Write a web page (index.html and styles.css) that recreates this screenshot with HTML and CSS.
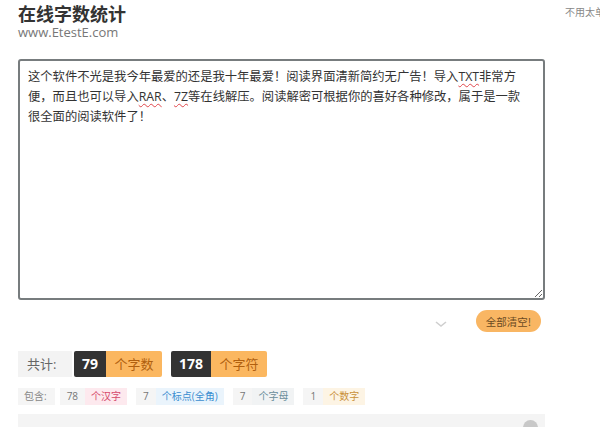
FILE: index.html
```html
<!DOCTYPE html>
<html lang="zh-CN">
<head>
    <meta charset="UTF-8">
    <meta name="viewport" content="width=device-width, initial-scale=1.0">
    <title>在线字数统计</title>
    <link rel="stylesheet" href="styles.css">
</head>
<body>
    <div class="page">
        <div class="main">
            <h1 class="title">在线字数统计</h1>
            <div class="site">www.EtestE.com</div>

            <!-- 输入区域 -->
            <div class="editor">这个软件不光是我今年最爱的还是我十年最爱！阅读界面清新简约无广告！导入<span class="typo">TXT</span>非常方<br>便，而且也可以导入<span class="typo">RAR</span>、<span class="typo">7Z</span>等在线解压。阅读解密可根据你的喜好各种修改，属于是一款<br>很全面的阅读软件了！</div>

            <div class="tools">
                <span class="more">
                    <svg width="12" height="8" viewBox="0 0 12 8"><path d="M1 2 L6 6 L11 2" fill="none" stroke="#cfcfcf" stroke-width="1.6"/></svg>
                </span>
                <button class="clear-btn">全部清空!</button>
            </div>

            <!-- 统计结果 -->
            <div class="total">
                <span class="total-label">共计:</span>
                <span class="num">79</span><span class="unit">个字数</span>
                <span class="num gap">178</span><span class="unit">个字符</span>
            </div>

            <div class="detail">
                <span class="detail-label">包含:</span>
                <span class="dnum">78</span><span class="dunit pink">个汉字</span>
                <span class="dnum">7</span><span class="dunit blue">个标点(全角)</span>
                <span class="dnum">7</span><span class="dunit slate">个字母</span>
                <span class="dnum">1</span><span class="dunit cream">个数字</span>
            </div>

            <div class="extra">
                <span class="close-dot"></span>
            </div>
        </div>
        <div class="side">不用太单独下载软件</div>
    </div>
</body>
</html>
```

FILE: styles.css
```css
body {
    margin: 0;
    background: #fff;
    color: #333;
    font-family: "Open Sans", "Noto Sans CJK SC", sans-serif;
    overflow: hidden;
}

.page {
    display: flex;
    gap: 20px;
    padding-left: 18px;
    height: 427px;
    overflow: hidden;
}

.main {
    width: 527px;
    flex-shrink: 0;
}

.side {
    padding-top: 4px;
    font-size: 10px;
    color: #888;
    white-space: nowrap;
    overflow: hidden;
}

.title {
    margin: 0;
    font-family: "Noto Sans CJK SC", sans-serif;
    font-size: 18px;
    line-height: 26px;
    font-weight: bold;
    color: #333;
}

.site {
    font-size: 13px;
    line-height: 13px;
    color: #777;
}

.editor {
    margin-top: 20px;
    height: 225px;
    padding: 6px 8px;
    border: 2px solid #777c7e;
    border-radius: 3px;
    font-size: 12.3px;
    line-height: 20px;
    color: #333;
    white-space: nowrap;
    resize: both;
    overflow: auto;
}

.typo {
    text-decoration: underline wavy #e0474c;
    text-decoration-thickness: 1px;
    text-underline-offset: 2px;
}

.tools {
    display: flex;
    justify-content: flex-end;
    align-items: center;
    gap: 29px;
    margin-top: 10px;
    padding-right: 4px;
}

.more {
    display: flex;
    margin-top: 6px;
}

.clear-btn {
    height: 22px;
    width: 65px;
    padding: 0;
    border: none;
    border-radius: 11px;
    background: #f9b663;
    color: #6b4a22;
    font-family: "Noto Sans CJK SC", sans-serif;
    font-size: 10.5px;
}

.total {
    display: flex;
    align-items: center;
    margin-top: 19px;
    height: 26px;
    font-size: 13px;
}

.total > span {
    height: 26px;
    line-height: 26px;
}

.total-label {
    width: 54px;
    padding-left: 9px;
    box-sizing: border-box;
    background: #f3f3f3;
    color: #666;
    margin-right: 2px;
}

.num {
    padding: 0 8px;
    background: #333;
    color: #fff;
    font-weight: bold;
    font-size: 14px;
    border-radius: 2px 0 0 2px;
}

.num.gap {
    margin-left: 9px;
}

.unit {
    width: 56px;
    text-align: center;
    background: #fbb760;
    color: #b0600f;
    border-radius: 0 2px 2px 0;
}

.detail {
    display: flex;
    align-items: center;
    margin-top: 11px;
    height: 17px;
    font-size: 10px;
}

.detail > span {
    height: 17px;
    line-height: 17px;
}

.detail-label {
    padding: 0 8px 0 6px;
    background: #f5f5f5;
    color: #888;
    margin-right: 5px;
}

.dnum {
    padding: 0 7px;
    background: #f5f5f5;
    color: #777;
}

.dunit {
    padding: 0 6px;
    margin-right: 9px;
}

.pink {
    background: #fde9ee;
    color: #d5486a;
}

.blue {
    background: #eaf4fc;
    color: #3a8ed0;
}

.slate {
    background: #f1f3f4;
    color: #6a8d9a;
}

.cream {
    background: #fdf4e4;
    color: #c9913a;
}

.extra {
    position: relative;
    margin-top: 9px;
    height: 40px;
    background: #f4f4f4;
}

.close-dot {
    position: absolute;
    right: 7px;
    top: 6px;
    width: 15px;
    height: 15px;
    border-radius: 50%;
    background: #c8c8c8;
}
```
